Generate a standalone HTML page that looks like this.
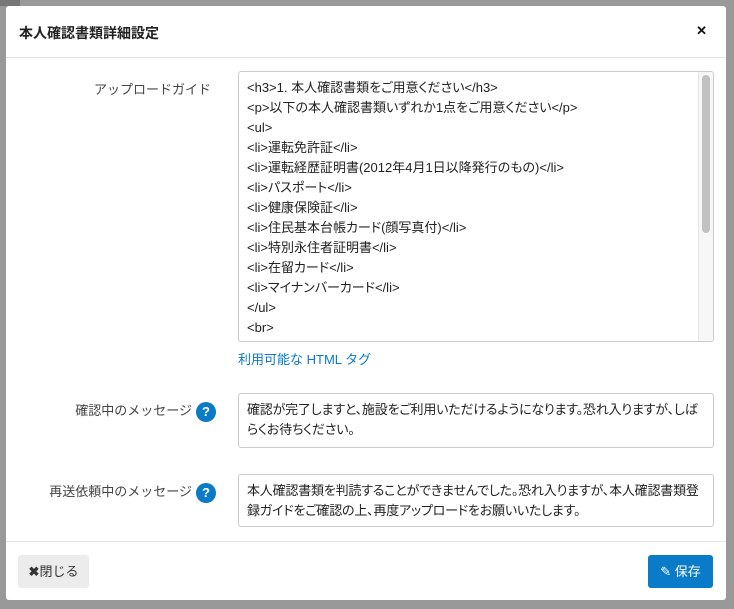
<!DOCTYPE html>
<html><head><meta charset="utf-8"><style>
*{box-sizing:border-box}
html,body{margin:0;width:734px;height:609px;overflow:hidden}
body{background:#999;font-family:"Liberation Sans","Noto Sans CJK JP",sans-serif;color:#333;position:relative}
.bgtxt{position:absolute;font-size:13px;color:#222}
.modal{position:absolute;left:6px;top:6px;width:720px;height:594px;background:#fff;border-radius:3px}
.hd{height:52px;border-bottom:1px solid #e5e5e5;position:relative}
.hd h4{margin:0;position:absolute;left:13px;top:17px;font-size:14px;font-weight:bold;color:#222}
.x{position:absolute;right:19px;top:17px;font-size:13px;font-weight:bold;color:#111}
.lbl{position:absolute;font-size:13px;color:#444;text-align:right}
.ta{position:absolute;border:1px solid #ccc;border-radius:3px;font-size:13px;color:#222;line-height:20px;padding:6px 8px;overflow:hidden;font-feature-settings:"palt";letter-spacing:-0.2px}
.q{display:inline-block;width:20px;height:20px;border-radius:50%;background:#0a7bc4;color:#fff;font-weight:bold;font-size:13px;text-align:center;line-height:20px;vertical-align:middle;margin-left:4px}
.ft{position:absolute;left:0;right:0;top:535px;border-top:1px solid #e5e5e5}
.btn{position:absolute;top:549px;height:33px;border-radius:3px;font-size:13px;line-height:33px;text-align:center}
</style></head><body>
<div style="position:absolute;left:0;top:0;width:20px;height:6px;background:#777"></div>
<div class="modal">
 <div class="hd"><h4>本人確認書類詳細設定</h4><span class="x">✕</span></div>
 <div class="lbl" style="left:60px;width:145px;top:73px">アップロードガイド</div>
 <div class="ta" style="left:232px;top:65px;width:476px;height:271px;padding-right:30px;letter-spacing:0">
&lt;h3&gt;1. 本人確認書類をご用意ください&lt;/h3&gt;<br>&lt;p&gt;以下の本人確認書類いずれか1点をご用意ください&lt;/p&gt;<br>&lt;ul&gt;<br>&lt;li&gt;運転免許証&lt;/li&gt;<br>&lt;li&gt;運転経歴証明書(2012年4月1日以降発行のもの)&lt;/li&gt;<br>&lt;li&gt;パスポート&lt;/li&gt;<br>&lt;li&gt;健康保険証&lt;/li&gt;<br>&lt;li&gt;住民基本台帳カード(顔写真付)&lt;/li&gt;<br>&lt;li&gt;特別永住者証明書&lt;/li&gt;<br>&lt;li&gt;在留カード&lt;/li&gt;<br>&lt;li&gt;マイナンバーカード&lt;/li&gt;<br>&lt;/ul&gt;<br>&lt;br&gt;
  <div style="position:absolute;right:0;top:0;width:15px;height:100%;background:#f7f7f7;border-left:1px solid #e5e5e5"><div style="margin:3px 3px;width:8px;height:158px;border-radius:4px;background:#c1c1c1"></div></div>
 </div>
 <div style="position:absolute;left:232px;top:343px;font-size:13px;color:#0a7bc4">利用可能な HTML タグ</div>
 <div class="lbl" style="left:20px;width:190px;top:394px">確認中のメッセージ<span class="q">?</span></div>
 <div class="ta" style="left:232px;top:387px;width:476px;height:55px">確認が完了しますと、施設をご利用いただけるようになります。恐れ入りますが、しば<br>らくお待ちください。</div>
 <div class="lbl" style="left:10px;width:200px;top:475px">再送依頼中のメッセージ<span class="q">?</span></div>
 <div class="ta" style="left:232px;top:468px;width:476px;height:53px">本人確認書類を判読することができませんでした。恐れ入りますが、本人確認書類登<br>録ガイドをご確認の上、再度アップロードをお願いいたします。</div>
 <div class="ft"></div>
 <div class="btn" style="left:12px;width:71px;background:#ececec;color:#333"><b>✖</b>閉じる</div>
 <div class="btn" style="left:642px;width:65px;background:#0a7bc8;color:#fff">✎ 保存</div>
</div>
</body></html>
